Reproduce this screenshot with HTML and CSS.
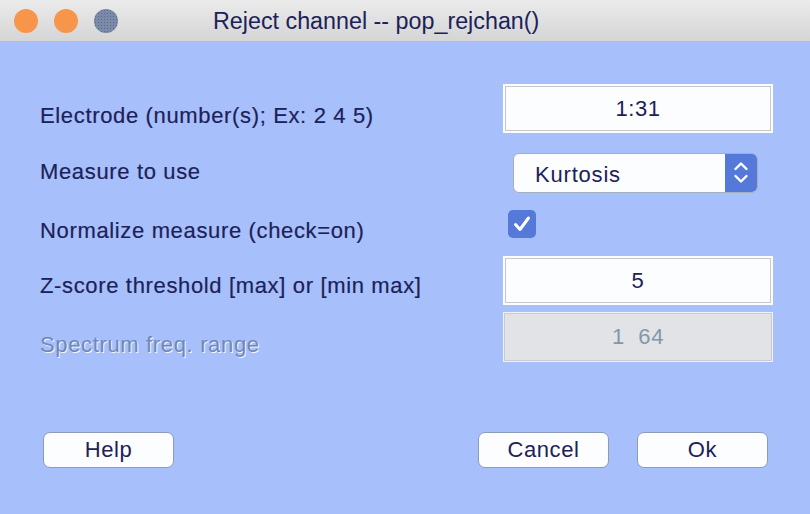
FILE: index.html
```html
<!DOCTYPE html>
<html>
<head>
<meta charset="utf-8">
<link rel="stylesheet" href="styles.css">
</head>
<body>
<div class="window">
  <div class="titlebar">
    <div class="lights">
      <span class="light orange"></span>
      <span class="light orange"></span>
      <span class="light grey"></span>
    </div>
    <div class="title">Reject channel -- pop_rejchan()</div>
  </div>
  <div class="content">
    <div class="row r1">
      <div class="label l1">Electrode (number(s); Ex: 2 4 5)</div>
      <div class="field">1:31</div>
    </div>
    <div class="row r2">
      <div class="label l2">Measure to use</div>
      <div class="select">
        <span class="select-text">Kurtosis</span>
        <span class="select-arrows">
          <svg width="16" height="28" viewBox="0 0 16 28">
            <path d="M2.5 10 L8 4.5 L13.5 10" fill="none" stroke="#fff" stroke-width="2.4" stroke-linecap="round" stroke-linejoin="round"/>
            <path d="M2.5 17 L8 22.5 L13.5 17" fill="none" stroke="#fff" stroke-width="2.4" stroke-linecap="round" stroke-linejoin="round"/>
          </svg>
        </span>
      </div>
    </div>
    <div class="row r3">
      <div class="label l3">Normalize measure (check=on)</div>
      <div class="checkbox">
        <svg width="28" height="28" viewBox="0 0 28 28">
          <path d="M7.5 14.5 L12 19.5 L20.5 8" fill="none" stroke="#fff" stroke-width="3" stroke-linecap="round" stroke-linejoin="round"/>
        </svg>
      </div>
    </div>
    <div class="row r4">
      <div class="label l4">Z-score threshold [max] or [min max]</div>
      <div class="field">5</div>
    </div>
    <div class="row r5">
      <div class="label l5 disabled">Spectrum freq. range</div>
      <div class="field field-disabled">1  64</div>
    </div>
    <div class="buttons">
      <div class="btn help">Help</div>
      <div class="btn-group">
        <div class="btn">Cancel</div>
        <div class="btn">Ok</div>
      </div>
    </div>
  </div>
</div>
</body>
</html>
```
FILE: styles.css
```css
html, body {
  margin: 0;
  padding: 0;
}
body {
  width: 810px;
  height: 514px;
  overflow: hidden;
  font-family: "Liberation Sans", Arial, sans-serif;
  color: #1d2159;
  background: #a7c0fb;
}
.window {
  width: 810px;
  height: 514px;
  display: flex;
  flex-direction: column;
}
.titlebar {
  height: 41px;
  border-bottom: 1px solid #b9bcc4;
  background: linear-gradient(#ebebeb, #d5d5d5);
  display: flex;
  align-items: flex-start;
}
.lights {
  display: flex;
  gap: 16px;
  padding: 9px 0 0 14px;
}
.light {
  width: 24px;
  height: 24px;
  border-radius: 50%;
}
.orange { background: #f7964a; }
.grey {
  background: #7a8aa8;
  background-image: radial-gradient(circle, #5a6a8c 1px, transparent 1px);
  background-size: 3px 3px;
}
.title {
  margin-left: 95px;
  margin-top: 7px;
  font-size: 23.3px;
  line-height: 28px;
  color: #1d2159;
  white-space: nowrap;
}
.content {
  flex: 1;
  padding: 42px 0 0 40px;
  display: flex;
  flex-direction: column;
}
.row {
  display: flex;
  align-items: flex-start;
}
.label {
  width: 463px;
  font-size: 22px;
  letter-spacing: 0.65px;
  line-height: 24px;
  white-space: nowrap;
  -webkit-text-stroke: 0.2px #1d2159;
}
.r1 { height: 49px; }
.r2 { height: 40px; margin-top: 20px; }
.r3 { height: 28px; margin-top: 17px; }
.r4 { height: 49px; margin-top: 18px; }
.r5 { height: 50px; margin-top: 7px; }
.l1 { margin-top: 20px; }
.l2 { margin-top: 7px; }
.l3 { margin-top: 9px; }
.l4 { margin-top: 18px; }
.l5 { margin-top: 21px; }
.disabled {
  color: #7088b8;
  -webkit-text-stroke: 0;
  text-shadow: 1px 1px 0 #f2f5ff;
}
.field {
  box-sizing: border-box;
  width: 270px;
  height: 100%;
  background: #fcfdff;
  border: 2px solid #fcfdff;
  box-shadow: inset 0 0 0 1px #c6c8cc;
  font-size: 22px;
  letter-spacing: 0.6px;
  display: flex;
  align-items: center;
  justify-content: center;
  white-space: pre;
}
.field-disabled {
  background: #e2e3e6;
  border: 1px solid #f0f1f4;
  box-shadow: inset 0 0 0 1px #cacbce;
  color: #8596aa;
}
.select {
  box-sizing: border-box;
  margin-left: 10px;
  width: 245px;
  height: 40px;
  border: 1px solid #a5adc0;
  border-radius: 6px;
  background: #fcfdff;
  display: flex;
  overflow: hidden;
}
.select-text {
  flex: 1;
  font-size: 22px;
  letter-spacing: 0.8px;
  padding-left: 21px;
  line-height: 40px;
  margin-top: 1px;
}
.select-arrows {
  width: 32px;
  background: #5479d9;
  display: flex;
  align-items: center;
  justify-content: center;
}
.checkbox {
  margin-left: 5px;
  width: 28px;
  height: 28px;
  border-radius: 5px;
  background: #5479d9;
  display: flex;
}
.buttons {
  margin-top: 70px;
  margin-left: 3px;
  display: flex;
  justify-content: space-between;
  width: 725px;
}
.btn-group {
  display: flex;
  gap: 28px;
}
.btn {
  box-sizing: border-box;
  width: 131px;
  height: 36px;
  border: 1px solid #8c9bb8;
  border-radius: 7px;
  background: #fbfdff;
  font-size: 22px;
  letter-spacing: 0.6px;
  display: flex;
  align-items: center;
  justify-content: center;
}
```
